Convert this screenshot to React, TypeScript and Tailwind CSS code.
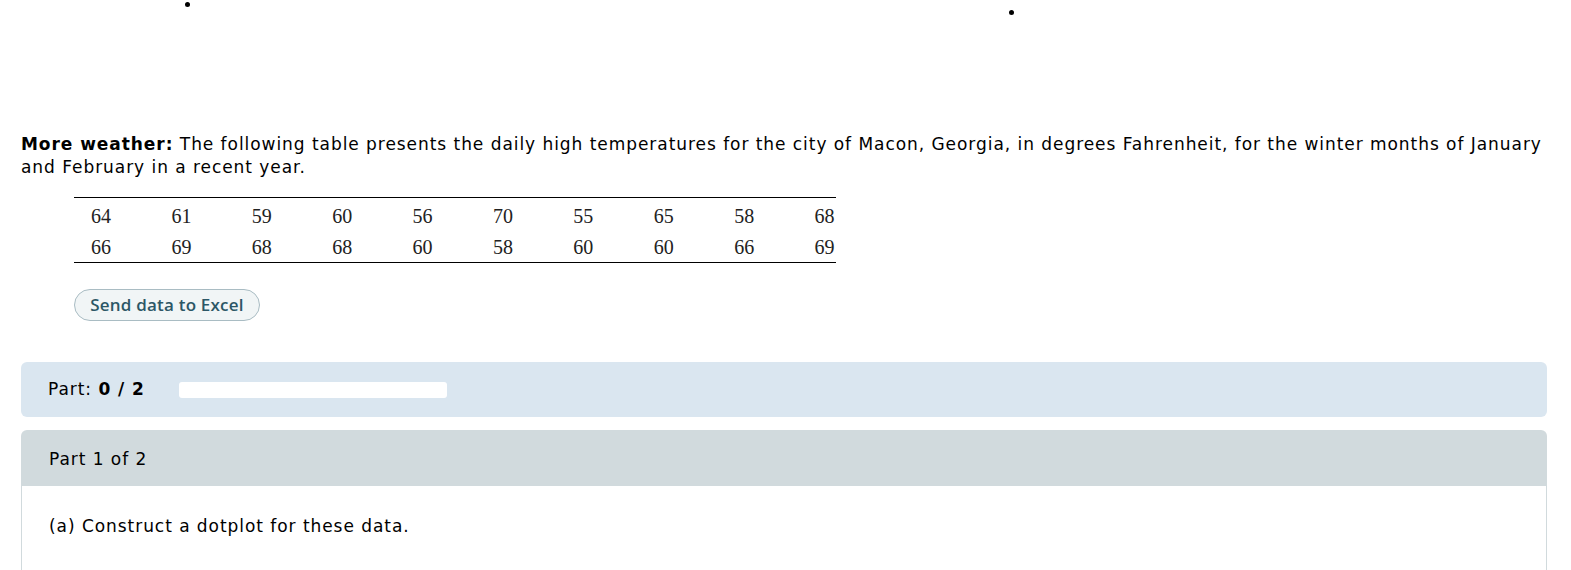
const row1 = [64, 61, 59, 60, 56, 70, 55, 65, 58, 68];
const row2 = [66, 69, 68, 68, 60, 58, 60, 60, 66, 69];

const DataRow = ({ values }: { values: number[] }) => (
  <div className="flex h-[31px] items-center pl-[17px] pt-[2px]">
    {values.map((v, i) => (
      <div key={i} className="w-[80.4px] shrink-0 leading-none">
        {v}
      </div>
    ))}
  </div>
);

export default function App() {
  return (
    <div className="relative min-h-[570px] bg-white font-['DejaVu_Sans',Verdana,sans-serif] tracking-[0.95px] text-black">
      {/* stray dots at the top */}
      <div className="absolute left-[185px] top-[2px] h-[5px] w-[5px] rounded-full bg-black" />
      <div className="absolute left-[1009px] top-[10px] h-[5px] w-[5px] rounded-full bg-black" />

      <div className="pl-[21px] pr-[24px] pt-[133px]">
        <p className="text-[17px] leading-[23px]">
          <span className="font-bold">More weather:</span> The following table presents the daily high
          temperatures for the city of Macon, Georgia, in degrees Fahrenheit, for the winter months of
          January and February in a recent year.
        </p>

        <div className="ml-[53px] mt-[18px] w-[762px] border-y-[1.5px] border-black py-[1px] font-['Liberation_Serif','Times_New_Roman',serif] text-[20px] tracking-normal text-[#222]">
          <DataRow values={row1} />
          <DataRow values={row2} />
        </div>

        <button className="ml-[53px] mt-[26px] h-[32px] w-[186px] rounded-full border border-[#a9bcc3] bg-[#f1f5f6] font-['Open_Sans',sans-serif] text-[17px] font-semibold tracking-[0.2px] text-[#2c5766]">
          Send data to Excel
        </button>

        <div className="mt-[41px] flex h-[55px] w-[1526px] items-center rounded-[6px] bg-[#dae6f0] pl-[27px]">
          <span className="text-[17px]">
            Part: <span className="font-bold">0 / 2</span>
          </span>
          <div className="ml-[34px] h-[16px] w-[268px] rounded-[3px] bg-white" />
        </div>

        <div className="mt-[13px] w-[1526px]">
          <div className="flex h-[56px] items-center rounded-t-[6px] bg-[#d1dadd] pl-[28px] pt-[4px] text-[17px]">
            Part 1 of 2
          </div>
          <div className="h-[90px] border-x border-[#d1dadd] pl-[27px] pt-[28px] text-[17px]">
            (a) Construct a dotplot for these data.
          </div>
        </div>
      </div>
    </div>
  );
}
